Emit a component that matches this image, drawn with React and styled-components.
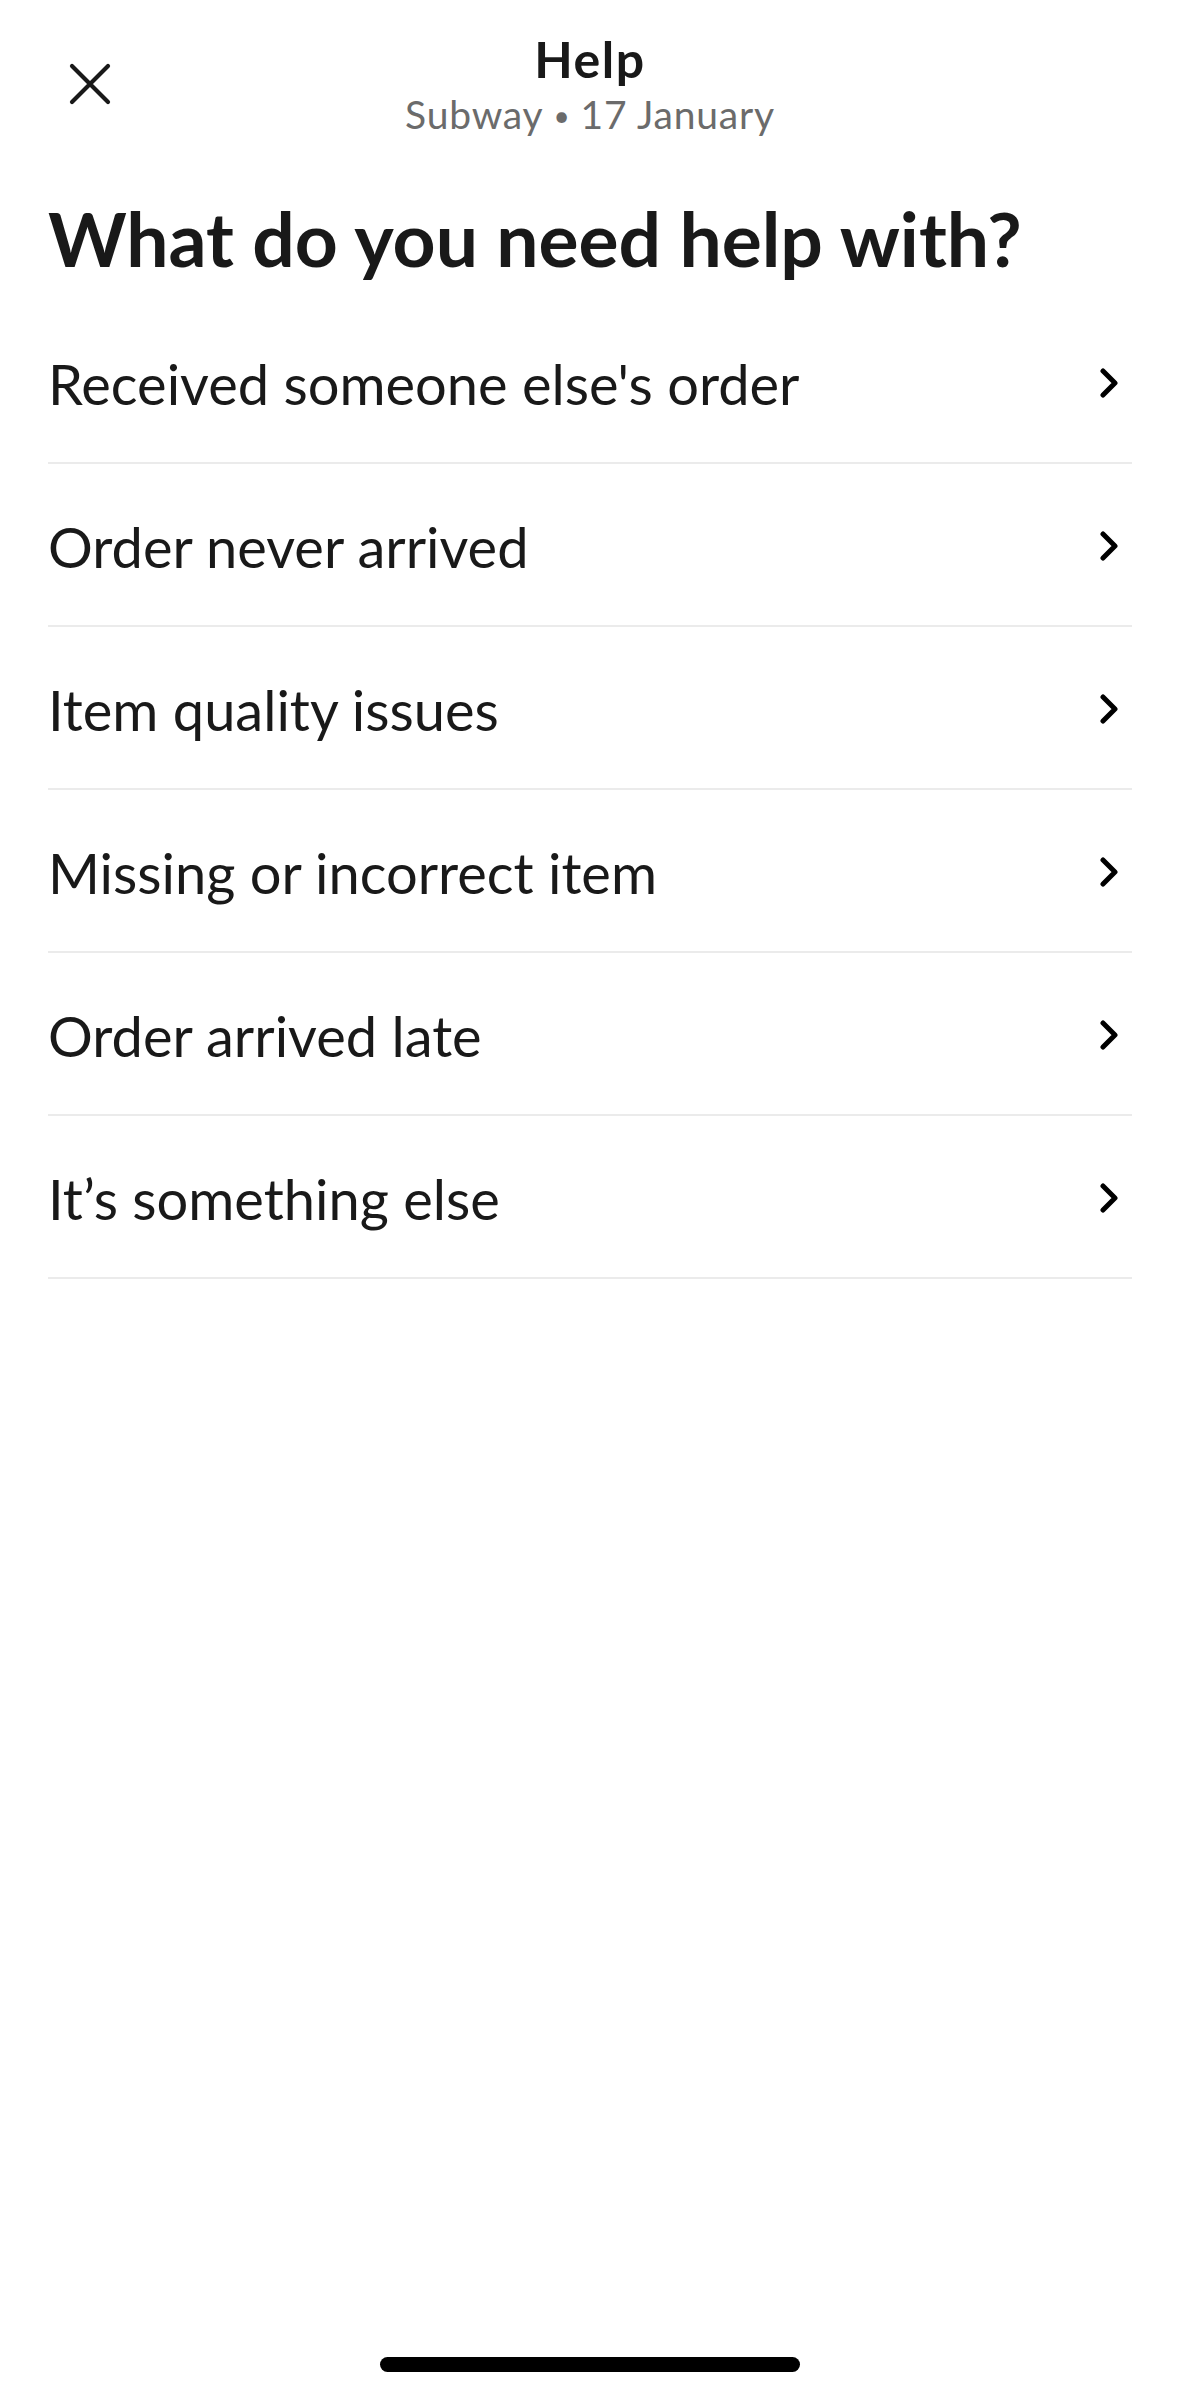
import * as React from 'react'
import styled, { createGlobalStyle } from 'styled-components'

const GlobalStyle = createGlobalStyle`
    html, body {
        margin: 0;
        padding: 0;
        background: #ffffff;
    }
    body {
        font-family: Lato, "Noto Sans", sans-serif;
        color: #191919;
        -webkit-font-smoothing: antialiased;
    }
`

const Page = styled.div`
    display: flex;
    flex-direction: column;
    width: 1179px;
    min-height: 2396px;
    background: #ffffff;
`

const Header = styled.header`
    display: grid;
    grid-template-columns: 1fr auto 1fr;
    align-items: center;
    padding: 31px 47px 0 48px;
`

const CloseButton = styled.button`
    display: flex;
    align-items: center;
    justify-content: center;
    width: 84px;
    height: 84px;
    padding: 0;
    border: 0;
    background: transparent;
    color: #191919;
    justify-self: start;
`

const TitleBlock = styled.div`
    display: flex;
    flex-direction: column;
    align-items: center;
`

const HeaderTitle = styled.div`
    font-size: 50px;
    line-height: 56px;
    font-weight: 700;
    letter-spacing: 1.5px;
    color: #191919;
`

const HeaderSubtitle = styled.div`
    margin-top: 5px;
    font-size: 39px;
    line-height: 44px;
    font-weight: 400;
    letter-spacing: 0.8px;
    color: #6b6b6b;
`

const Dot = styled.span`
    display: inline-block;
    margin: 0 10px;
    font-size: 28px;
    vertical-align: 3px;
`

const Heading = styled.h1`
    margin: 59px 48px 0 48px;
    font-size: 75px;
    line-height: 84px;
    font-weight: 700;
    color: #191919;
`

const List = styled.ul`
    list-style: none;
    margin: 21px 47px 0 48px;
    padding: 0;
`

const Row = styled.li`
    display: flex;
    align-items: center;
    justify-content: space-between;
    height: 163px;
    padding-top: 3px;
    box-sizing: border-box;
    border-bottom: 2px solid #ebebeb;
`

const RowLabel = styled.span`
    font-size: 56px;
    font-weight: 400;
    color: #191919;
`

const Chevron = styled.svg`
    margin-right: 14px;
    flex-shrink: 0;
`

const HomeBar = styled.div`
    align-self: center;
    margin-top: auto;
    margin-bottom: 24px;
    width: 420px;
    height: 15px;
    border-radius: 8px;
    background: #000000;
`

const CloseIcon = () => (
    <svg width="42" height="42" viewBox="0 0 42 42" fill="none">
        <path
            d="M3 3 L39 39 M39 3 L3 39"
            stroke="currentColor"
            strokeWidth="4.2"
            strokeLinecap="round"
        />
    </svg>
)

const ChevronIcon = () => (
    <Chevron width="18" height="30" viewBox="0 0 18 30" fill="none">
        <path
            d="M3 3 L15 15 L3 27"
            stroke="#000000"
            strokeWidth="5"
            strokeLinecap="round"
            strokeLinejoin="round"
        />
    </Chevron>
)

const options = [
    "Received someone else's order",
    'Order never arrived',
    'Item quality issues',
    'Missing or incorrect item',
    'Order arrived late',
    'It\u2019s something else',
]

export default function App() {
    return (
        <Page>
            <GlobalStyle />
            <Header>
                <CloseButton aria-label="Close">
                    <CloseIcon />
                </CloseButton>
                <TitleBlock>
                    <HeaderTitle>Help</HeaderTitle>
                    <HeaderSubtitle>
                        Subway<Dot>•</Dot>17 January
                    </HeaderSubtitle>
                </TitleBlock>
                <div />
            </Header>
            <Heading>What do you need help with?</Heading>
            <List>
                {options.map(label => (
                    <Row key={label}>
                        <RowLabel>{label}</RowLabel>
                        <ChevronIcon />
                    </Row>
                ))}
            </List>
            <HomeBar />
        </Page>
    )
}
